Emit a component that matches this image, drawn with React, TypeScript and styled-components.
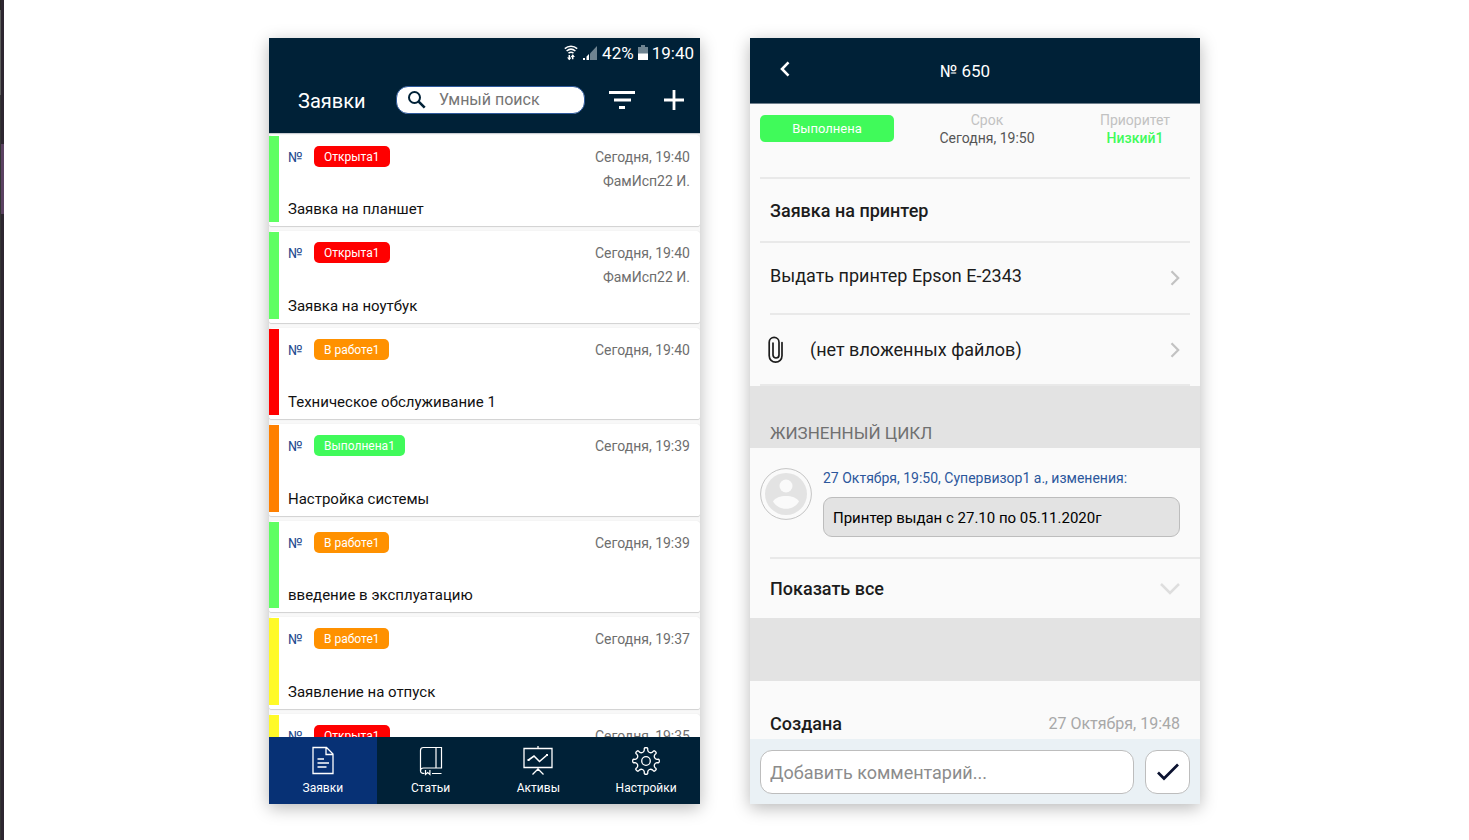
import React from "react";
import styled, { createGlobalStyle } from "styled-components";

const GlobalStyle = createGlobalStyle`
  *, *::before, *::after { box-sizing: border-box; }
  body { margin: 0; background: #fff; }
  body, button, input { font-family: Roboto, "Liberation Sans", sans-serif; }
  button { border: 0; padding: 0; background: none; color: inherit; cursor: pointer; }
  h1, h2, h3, p, ul { margin: 0; padding: 0; }
  ul { list-style: none; }
  svg { display: block; flex: none; }
`;

const navy = "#002137";

const Page = styled.div`
  display: flex;
  justify-content: center;
  height: 100vh;
  min-height: 640px;
  padding: 38px 16px 36px;
  background:
    linear-gradient(#282626 0 10px, #5c5e5c 10px 95px, #343434 95px) left top / 1px 100% no-repeat,
    linear-gradient(#2d2630 0 144px, #5b4262 144px 214px, #2d2630 214px) left top / 4px 100% no-repeat,
    #fff;
`;

const Screens = styled.main`
  display: grid;
  grid-template-columns: 431fr 450fr;
  grid-template-rows: 100%;
  gap: 50px;
  width: 100%;
  max-width: 931px;
`;

const Phone = styled.section<{ $bg: string }>`
  display: flex;
  flex-direction: column;
  min-width: 0;
  background: ${(p) => p.$bg};
  box-shadow: 0 4px 16px rgba(0, 0, 0, 0.28);
`;

/* ---- request list ---- */

const ListHeader = styled.header`
  flex: none;
  background: ${navy};
  color: #fff;
`;

const StatusBar = styled.div`
  display: flex;
  align-items: center;
  justify-content: flex-end;
  gap: 4px;
  height: 30px;
  padding-right: 6px;
  font-size: 17px;
  line-height: 30px;
`;

const TitleBar = styled.div`
  display: flex;
  align-items: center;
  height: 65px;
  padding: 0 11px 2px 29px;
`;

const ListTitle = styled.h1`
  flex: none;
  width: 98px;
  padding-top: 2px;
  font-size: 20px;
  line-height: 24px;
  font-weight: 400;
`;

const SearchBox = styled.label`
  display: flex;
  flex: 1;
  align-items: center;
  gap: 12px;
  min-width: 0;
  height: 28px;
  padding-left: 10px;
  border: 1px solid #2f5a9c;
  border-radius: 12px;
  background: #fff;
  color: ${navy};
`;

const SearchInput = styled.input`
  flex: 1;
  min-width: 0;
  height: 24px;
  padding: 0;
  border: 0;
  outline: 0;
  background: none;
  font-size: 16px;
  &::placeholder { color: #757575; opacity: 1; }
`;

const IconButton = styled.button`
  display: grid;
  place-items: center;
  width: 30px;
  height: 30px;
  margin-left: 22px;
`;

const Requests = styled.ul`
  flex: 1;
  min-height: 0;
  border-top: 1px solid #c9cdd2;
  overflow: hidden;
  background: #f8f8f8;
`;

const RequestItem = styled.li`
  height: 16%;
  min-height: 84px;
  padding: 1px 0 3px;
`;

const Card = styled.article`
  display: flex;
  height: 100%;
  border-bottom: 1px solid #d4d4d4;
  border-radius: 3px;
  background: #fff;
  box-shadow: 0 0 1px rgba(0, 0, 0, 0.15);
`;

const Stripe = styled.div<{ $color: string }>`
  flex: none;
  width: 10px;
  margin: 1px 0 4px;
  background: ${(p) => p.$color};
`;

const CardBody = styled.div`
  display: flex;
  flex: 1;
  flex-direction: column;
  justify-content: space-between;
  padding: 10px 10px 7px 9px;
`;

const CardTop = styled.div`
  display: flex;
  align-items: flex-start;
`;

const NumberSign = styled.span`
  width: 26px;
  color: #1f4a8f;
  font-size: 14px;
  line-height: 24px;
`;

const Badge = styled.span<{ $color: string }>`
  height: 21px;
  padding: 0 10px;
  margin-top: 1px;
  border-radius: 5px;
  background: ${(p) => p.$color};
  color: #fff;
  font-size: 12px;
  line-height: 22px;
`;

const CardMeta = styled.div`
  margin-left: auto;
  color: #6e6e6e;
  font-size: 14px;
  line-height: 24px;
  text-align: right;
`;

const CardTitle = styled.h2`
  color: #111;
  font-size: 15px;
  line-height: 20px;
  font-weight: 400;
`;

const Tabs = styled.nav`
  display: grid;
  flex: none;
  grid-template-columns: repeat(4, 1fr);
  height: 67px;
  background: ${navy};
`;

const Tab = styled.a<{ $active?: boolean }>`
  display: flex;
  flex-direction: column;
  align-items: center;
  gap: 4px;
  padding-top: 9px;
  background: ${(p) => (p.$active ? "#073175" : "transparent")};
  color: #fff;
  font-size: 12px;
  line-height: 16px;
  text-decoration: none;
`;

/* ---- request details ---- */

const DetailHeader = styled.header`
  display: grid;
  flex: none;
  grid-template-columns: 70px 1fr 90px;
  align-items: center;
  height: 66px;
  border-bottom: 1px solid #6f7f8c;
  background: ${navy};
  color: #fff;
`;

const BackButton = styled.button`
  display: grid;
  place-items: center;
  height: 40px;
  padding-bottom: 4px;
`;

const DetailTitle = styled.h1`
  font-size: 17px;
  line-height: 24px;
  font-weight: 400;
  text-align: center;
`;

const DetailContent = styled.div`
  flex: 1;
  min-height: 0;
  overflow: hidden;
`;

const Summary = styled.div`
  display: grid;
  grid-template-columns: 134px 1fr 110px;
  height: 75px;
  margin: 0 10px;
  padding-top: 7px;
  border-bottom: 2px solid #e9e9e9;
`;

const StateBadge = styled.div`
  height: 27px;
  margin-top: 4px;
  border-radius: 5px;
  background: #40fa5a;
  color: #fff;
  font-size: 13px;
  line-height: 28px;
  text-align: center;
`;

const Fact = styled.div`
  color: #c2c2c2;
  font-size: 14px;
  line-height: 18px;
  text-align: center;
`;

const FactValue = styled.div<{ $good?: boolean }>`
  color: ${(p) => (p.$good ? "#40fa5a" : "#555")};
  font-weight: ${(p) => (p.$good ? 500 : 400)};
`;

const Subject = styled.h2`
  height: 64px;
  margin: 0 10px;
  padding: 0 10px;
  border-bottom: 2px solid #e9e9e9;
  color: #1c1c1c;
  font-size: 18px;
  line-height: 64px;
  font-weight: 500;
`;

const LinkRow = styled.a<{ $inset?: boolean }>`
  display: flex;
  align-items: center;
  height: ${(p) => (p.$inset ? 72 : 71)}px;
  margin: 0 10px 0 ${(p) => (p.$inset ? 20 : 10)}px;
  padding: 0 10px 0 ${(p) => (p.$inset ? 0 : 8)}px;
  border-bottom: 2px solid #e9e9e9;
  color: #1c1c1c;
  font-size: 18px;
  line-height: 24px;
  text-decoration: none;
`;

const LinkText = styled.span<{ $raised?: boolean }>`
  flex: 1;
  padding-bottom: ${(p) => (p.$raised ? 4 : 0)}px;
`;

const ClipSlot = styled.span`
  width: 42px;
`;

const SectionTitle = styled.h3`
  height: 62px;
  padding: 35px 20px 0;
  background: #e3e3e3;
  color: #707070;
  font-size: 17px;
  line-height: 24px;
  font-weight: 400;
`;

const Entry = styled.article`
  display: grid;
  grid-template-columns: 52px 1fr;
  gap: 11px;
  padding: 20px 20px 20px 10px;
`;

const EntryInfo = styled.p`
  color: #2c579c;
  font-size: 14px;
  line-height: 20px;
`;

const Message = styled.p`
  height: 40px;
  margin-top: 9px;
  padding: 0 9px;
  border: 1px solid #bdbdbd;
  border-radius: 9px;
  background: #e3e3e3;
  color: #000;
  font-size: 15px;
  line-height: 40px;
`;

const ShowAll = styled.button`
  display: flex;
  align-items: center;
  justify-content: space-between;
  width: calc(100% - 20px);
  height: 61px;
  margin-left: 20px;
  padding-right: 20px;
  border-top: 2px solid #e9e9e9;
  color: #1c1c1c;
  font-size: 18px;
  font-weight: 500;
`;

const Spacer = styled.div`
  height: 63px;
  background: #e3e3e3;
`;

const Created = styled.div`
  display: flex;
  justify-content: space-between;
  padding: 31px 20px 0;
  color: #1c1c1c;
  font-size: 18px;
  line-height: 24px;
  font-weight: 500;
`;

const CreatedTime = styled.time`
  color: #a8a8a8;
  font-size: 16px;
  font-weight: 400;
`;

const CommentForm = styled.form`
  display: flex;
  flex: none;
  gap: 11px;
  height: 65px;
  padding: 11px 10px 10px;
  background: #eaf1f5;
`;

const CommentInput = styled.input`
  flex: 1;
  min-width: 0;
  padding: 0 9px;
  border: 1px solid #bdbdbd;
  border-radius: 12px;
  outline: 0;
  background: #fff;
  font-size: 18px;
  &::placeholder { color: #8c8c8c; opacity: 1; }
`;

const SendButton = styled.button`
  display: grid;
  place-items: center;
  width: 45px;
  border: 1px solid #bdbdbd;
  border-radius: 12px;
  background: #fff;
`;

const green = "#5eff62";
const states = {
  open: { label: "Открыта1", color: "#ff0000" },
  work: { label: "В работе1", color: "#ff9100" },
  done: { label: "Выполнена1", color: "#40fa5a" },
};

type Request = {
  title: string;
  time: string;
  state: keyof typeof states;
  stripe: string;
  person?: string;
};

const requests: Request[] = [
  { title: "Заявка на планшет", time: "19:40", state: "open", stripe: green, person: "ФамИсп22 И." },
  { title: "Заявка на ноутбук", time: "19:40", state: "open", stripe: green, person: "ФамИсп22 И." },
  { title: "Техническое обслуживание 1", time: "19:40", state: "work", stripe: "#ff0000" },
  { title: "Настройка системы", time: "19:39", state: "done", stripe: "#ff8000" },
  { title: "введение в эксплуатацию", time: "19:39", state: "work", stripe: green },
  { title: "Заявление на отпуск", time: "19:37", state: "work", stripe: "#fffa28" },
  { title: "", time: "19:35", state: "open", stripe: "#fffa28" },
];

const WifiIcon = () => (
  <svg width="14" height="16" viewBox="0 0 14 16" fill="none" stroke="#fff" strokeWidth="1.5" aria-hidden="true">
    <path d="M.8 3.6c3.6-3.2 8.800-3.200 12.400 0M2.600 6c2.600-2.200 6.200-2.200 8.800 0M4.500 8.200c1.500-1.200 3.500-1.200 5 0" />
    <path d="M5.300 14.500V10M8.700 9.800v4.500" />
    <path fill="#fff" stroke="none" d="M3 12.500h4.600L5.300 15.200zM6.600 12l2.100-2.600 2.300 2.600z" />
  </svg>
);

const SignalIcon = () => (
  <svg width="16" height="16" viewBox="0 0 16 16" aria-hidden="true">
    <path fill="#6f8491" d="M8 8.500 15 1v14H8z" />
    <path fill="#fff" d="M1 13h2v2H1zM4.500 11.500 7 9v6H4.500z" />
  </svg>
);

const BatteryIcon = () => (
  <svg width="10" height="16" viewBox="0 0 10 16" aria-hidden="true">
    <path fill="#6f8491" d="M3 0h4v2h3v7H0V2h3z" />
    <path fill="#fff" d="M0 8.500h10V15H0z" />
  </svg>
);

const SearchIcon = () => (
  <svg width="20" height="20" viewBox="0 0 20 20" fill="none" stroke="currentColor" strokeWidth="2" aria-hidden="true">
    <circle cx="7.500" cy="7.500" r="5.500" />
    <path strokeWidth="2.600" d="m11.700 11.700 6 6" />
  </svg>
);

const FilterIcon = () => (
  <svg width="26" height="18" viewBox="0 0 26 18" fill="#fff" aria-hidden="true">
    <path d="M0 0h26v3H0zM5 7.500h17v3H5zM10 15h6v3h-6z" />
  </svg>
);

const PlusIcon = () => (
  <svg width="20" height="20" viewBox="0 0 20 20" fill="#fff" aria-hidden="true">
    <path d="M8.600 0h2.800v8.600H20v2.800h-8.600V20H8.600v-8.600H0V8.600h8.600z" />
  </svg>
);

const DocumentIcon = () => (
  <svg width="30" height="30" viewBox="0 0 30 30" fill="none" stroke="#fff" strokeWidth="1.300" aria-hidden="true">
    <path d="M5 1.500h13.500L25 8v19.500H5zM18 2v6.500h6.500M9.500 13h6.500M9.500 17h11.500M9.500 21h9" />
  </svg>
);

const BookIcon = () => (
  <svg width="30" height="30" viewBox="0 0 30 30" fill="none" stroke="#fff" strokeWidth="1.200" aria-hidden="true">
    <path d="M4.500 25V4.500c0-2 1-3 3-3h18V22h-18c-2 0-3 1-3 3s1 2.500 4 2.500M20 1.500V22M16 27.500h9.500" />
    <path d="M9.500 24v4.500l2.200-2 2.200 2V24" />
  </svg>
);

const BoardIcon = () => (
  <svg width="30" height="30" viewBox="0 0 30 30" fill="none" stroke="#fff" strokeWidth="1.300" aria-hidden="true">
    <path d="M1 2.500h28v19H1zM15 0v2.500M15 21.500V25M9.500 28.500l5.500-5.500 5.500 5.500" />
    <path strokeWidth="1.600" d="m5.500 14 5.500-4 5.500 5.500 7.500-6.500" />
    <path fill="#fff" stroke="none" d="M4.500 13h2v2h-2zM23 8h2v2h-2z" />
  </svg>
);

/* Outline of a cog: flat-topped teeth joined by rounded valleys. */
const cogPath = (teeth: number) => {
  const at = (radius: number, degrees: number) => {
    const a = (degrees * Math.PI) / 180;
    return `${(15 + radius * Math.sin(a)).toFixed(2)} ${(15 - radius * Math.cos(a)).toFixed(2)}`;
  };
  const step = 360 / teeth;
  let d = "";
  for (let i = 0; i < teeth; i++) {
    const c = i * step;
    d += `${i ? "L" : "M"}${at(11, c - 9)}L${at(12.6, c - 8)}Q${at(13.2, c - 7)} ${at(13.3, c - 4)}`;
    d += `L${at(13.3, c + 4)}Q${at(13.2, c + 7)} ${at(12.6, c + 8)}L${at(11, c + 9)}`;
    d += `C${at(8.8, c + 14)} ${at(8.8, c + step - 14)} ${at(11, c + step - 9)}`;
  }
  return `${d}Z`;
};

const GearIcon = () => (
  <svg width="30" height="30" viewBox="0 0 30 30" fill="none" stroke="#fff" strokeWidth="1.300" strokeLinejoin="round" aria-hidden="true">
    <circle cx="15" cy="15" r="4.300" />
    <path d={cogPath(8)} />
  </svg>
);

const BackIcon = () => (
  <svg width="10" height="16" viewBox="0 0 10 16" fill="none" stroke="#fff" strokeWidth="2.600" aria-hidden="true">
    <path d="M8.500 1.300 2 8l6.500 6.700" />
  </svg>
);

const ChevronRight = () => (
  <svg width="10" height="16" viewBox="0 0 10 16" fill="none" stroke="#c2c2c2" strokeWidth="2.200" aria-hidden="true">
    <path d="M1.500 1.300 8.200 8l-6.700 6.700" />
  </svg>
);

const ChevronDown = () => (
  <svg width="20" height="12" viewBox="0 0 20 12" fill="none" stroke="#dedede" strokeWidth="2.500" aria-hidden="true">
    <path d="m1 1 9 9 9-9" />
  </svg>
);

const ClipIcon = () => (
  <svg width="16" height="28" viewBox="0 0 16 28" fill="none" stroke="#1c1c1c" strokeWidth="1.700" strokeLinecap="round" aria-hidden="true">
    <path d="M14 6.500v13.300a6.400 6.400 0 0 1-12.800 0V6.200a4.900 4.900 0 0 1 9.800 0v12.800a3 3 0 0 1-6 0V7" />
  </svg>
);

const Avatar = () => (
  <svg width="52" height="52" viewBox="0 0 52 52" aria-hidden="true">
    <circle cx="26" cy="26" r="25.400" fill="#fafafa" stroke="#c4c4c4" />
    <circle cx="26" cy="26" r="21" fill="#e3e3e3" />
    <circle cx="26" cy="18" r="6.500" fill="#fafafa" />
    <path fill="#fafafa" d="M13 33.500c2-3.700 7.500-5.500 13-5.500s11 1.800 13 5.500c-2.500 4.500-7.500 7.300-13 7.300s-10.500-2.800-13-7.300z" />
  </svg>
);

const CheckIcon = () => (
  <svg width="22" height="18" viewBox="0 0 22 18" fill="none" stroke="#0b1230" strokeWidth="2.700" aria-hidden="true">
    <path d="m1 9.500 6 6L21 1.500" />
  </svg>
);

export default function App() {
  return (
    <>
      <GlobalStyle />
      <Page>
        <Screens>
          <Phone $bg="#f8f8f8">
            <ListHeader>
              <StatusBar>
                <WifiIcon />
                <SignalIcon />
                <span>42%</span>
                <BatteryIcon />
                <span>19:40</span>
              </StatusBar>
              <TitleBar>
                <ListTitle>Заявки</ListTitle>
                <SearchBox>
                  <SearchIcon />
                  <SearchInput type="search" placeholder="Умный поиск" aria-label="Умный поиск" />
                </SearchBox>
                <IconButton type="button" aria-label="Фильтр"><FilterIcon /></IconButton>
                <IconButton type="button" aria-label="Добавить"><PlusIcon /></IconButton>
              </TitleBar>
            </ListHeader>
            <Requests>
              {requests.map((r, i) => (
                <RequestItem key={i}>
                  <Card>
                    <Stripe $color={r.stripe} />
                    <CardBody>
                      <CardTop>
                        <NumberSign>№</NumberSign>
                        <Badge $color={states[r.state].color}>{states[r.state].label}</Badge>
                        <CardMeta>
                          <div>Сегодня, {r.time}</div>
                          {r.person && <div>{r.person}</div>}
                        </CardMeta>
                      </CardTop>
                      {r.title && <CardTitle>{r.title}</CardTitle>}
                    </CardBody>
                  </Card>
                </RequestItem>
              ))}
            </Requests>
            <Tabs>
              <Tab href="#requests" $active><DocumentIcon />Заявки</Tab>
              <Tab href="#articles"><BookIcon />Статьи</Tab>
              <Tab href="#assets"><BoardIcon />Активы</Tab>
              <Tab href="#settings"><GearIcon />Настройки</Tab>
            </Tabs>
          </Phone>

          <Phone $bg="#fafafa">
            <DetailHeader>
              <BackButton type="button" aria-label="Назад"><BackIcon /></BackButton>
              <DetailTitle>№ 650</DetailTitle>
            </DetailHeader>
            <DetailContent>
              <Summary>
                <StateBadge>Выполнена</StateBadge>
                <Fact>Срок<FactValue>Сегодня, 19:50</FactValue></Fact>
                <Fact>Приоритет<FactValue $good>Низкий1</FactValue></Fact>
              </Summary>
              <Subject>Заявка на принтер</Subject>
              <LinkRow href="#description" $inset>
                <LinkText $raised>Выдать принтер Epson E-2343</LinkText>
                <ChevronRight />
              </LinkRow>
              <LinkRow href="#files">
                <ClipSlot><ClipIcon /></ClipSlot>
                <LinkText>(нет вложенных файлов)</LinkText>
                <ChevronRight />
              </LinkRow>
              <SectionTitle>ЖИЗНЕННЫЙ ЦИКЛ</SectionTitle>
              <Entry>
                <Avatar />
                <div>
                  <EntryInfo>27 Октября, 19:50, Супервизор1 а., изменения:</EntryInfo>
                  <Message>Принтер выдан с 27.10 по 05.11.2020г</Message>
                </div>
              </Entry>
              <ShowAll type="button">Показать все<ChevronDown /></ShowAll>
              <Spacer />
              <Created>Создана<CreatedTime>27 Октября, 19:48</CreatedTime></Created>
            </DetailContent>
            <CommentForm onSubmit={(e) => e.preventDefault()}>
              <CommentInput type="text" placeholder="Добавить комментарий..." aria-label="Добавить комментарий" />
              <SendButton type="submit" aria-label="Отправить"><CheckIcon /></SendButton>
            </CommentForm>
          </Phone>
        </Screens>
      </Page>
    </>
  );
}
